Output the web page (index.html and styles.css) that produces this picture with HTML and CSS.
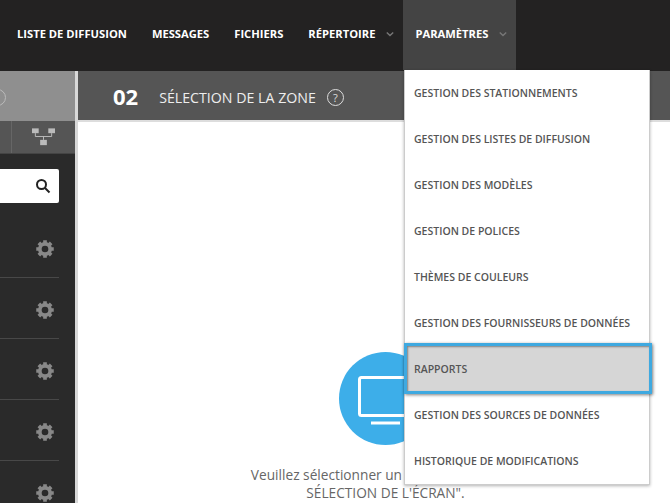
FILE: index.html
```html
<!DOCTYPE html>
<html lang="fr">
<head>
    <meta charset="UTF-8">
    <meta name="viewport" content="width=device-width, initial-scale=1.0">
    <title>Paramètres</title>
    <link rel="stylesheet" href="styles.css">
</head>
<body>
    <svg class="sprites" width="0" height="0">
        <symbol id="gear" viewBox="0 0 24 24">
            <g stroke="currentColor" stroke-width="4.4" fill="none">
                <circle cx="12" cy="12" r="6.2"/>
                <path d="M12 1.5V6M12 18v4.5M1.5 12H6M18 12h4.5M4.6 4.6l3 3M16.4 16.4l3 3M19.4 4.6l-3 3M7.6 16.4l-3 3"/>
            </g>
        </symbol>
    </svg>

    <header class="topbar">
        <nav class="nav">
            <a class="nav-item">LISTE DE DIFFUSION</a>
            <a class="nav-item">MESSAGES</a>
            <a class="nav-item">FICHIERS</a>
            <a class="nav-item has-menu">RÉPERTOIRE <svg class="chevron" viewBox="0 0 10 6"><path d="M1 1l4 4 4-4"/></svg></a>
            <a class="nav-item has-menu active">PARAMÈTRES <svg class="chevron" viewBox="0 0 10 6"><path d="M1 1l4 4 4-4"/></svg></a>
        </nav>
    </header>

    <div class="workspace">
        <aside class="sidebar">
            <div class="side-head"><span class="help help-side"></span></div>
            <div class="side-tools">
                <span class="tool-cell">
                    <svg class="tree-icon" viewBox="0 0 24 18">
                        <rect x="0" y="0" width="7" height="5"/>
                        <rect x="17" y="0" width="7" height="5"/>
                        <rect x="8.5" y="12" width="7" height="5.5"/>
                        <path class="tree-line" d="M3.5 5v3.5h17V5M12 8.5V12"/>
                    </svg>
                </span>
            </div>
            <div class="search-wrap">
                <div class="search-box">
                    <svg class="search-icon" viewBox="0 0 16 16"><circle cx="6.5" cy="6.5" r="4.5"/><path d="M10 10l4.5 4.5"/></svg>
                </div>
            </div>
            <ul class="zone-list">
                <li class="zone-row"><svg class="gear"><use href="#gear"/></svg></li>
                <li class="zone-row"><svg class="gear"><use href="#gear"/></svg></li>
                <li class="zone-row"><svg class="gear"><use href="#gear"/></svg></li>
                <li class="zone-row"><svg class="gear"><use href="#gear"/></svg></li>
                <li class="zone-row"><svg class="gear"><use href="#gear"/></svg></li>
            </ul>
        </aside>

        <main class="content">
            <div class="content-head">
                <span class="step">02</span>
                <h2 class="step-title">SÉLECTION DE LA ZONE</h2>
                <span class="help">?</span>
            </div>
            <div class="empty">
                <div class="empty-circle">
                    <svg class="monitor" viewBox="0 0 55 50">
                        <rect x="1.5" y="1.5" width="52" height="38" rx="2"/>
                        <path d="M13 47h29"/>
                    </svg>
                </div>
                <p class="empty-text">Veuillez sélectionner un écran de l'onglet "<br>SÉLECTION DE L'ÉCRAN".</p>
            </div>
        </main>
    </div>

    <ul class="dropdown">
        <li class="drop-item">GESTION DES STATIONNEMENTS</li>
        <li class="drop-item">GESTION DES LISTES DE DIFFUSION</li>
        <li class="drop-item">GESTION DES MODÈLES</li>
        <li class="drop-item">GESTION DE POLICES</li>
        <li class="drop-item">THÈMES DE COULEURS</li>
        <li class="drop-item">GESTION DES FOURNISSEURS DE DONNÉES</li>
        <li class="drop-item selected">RAPPORTS</li>
        <li class="drop-item">GESTION DES SOURCES DE DONNÉES</li>
        <li class="drop-item">HISTORIQUE DE MODIFICATIONS</li>
    </ul>
</body>
</html>
```

FILE: styles.css
```css
* {
    box-sizing: border-box;
}

html, body {
    height: 100%;
}

body {
    position: relative;
    margin: 0;
    overflow: hidden;
    font-family: "Open Sans", sans-serif;
    background-color: #fff;
}

.sprites {
    position: absolute;
}

.topbar {
    height: 71px;
    background-color: #232222;
}

.nav {
    display: flex;
    height: 70px;
    padding-left: 4.5px;
}

.nav-item {
    display: flex;
    align-items: center;
    gap: 11px;
    padding: 0 12.5px 3px;
    font-size: 11.2px;
    font-weight: 700;
    color: #fff;
    white-space: nowrap;
}

.nav-item.has-menu {
    padding-right: 8.5px;
}

.nav-item.active {
    background-color: #444;
}

.chevron {
    width: 8px;
    height: 6px;
    fill: none;
    stroke: #777;
    stroke-width: 1.8;
}

.workspace {
    display: flex;
    height: 432px;
}

/* left panel, cut by the window */
.sidebar {
    flex: none;
    width: 78px;
    border-right: 3px solid #d8d8d8;
    background-color: #2a2a2a;
    overflow: hidden;
}

.side-head {
    display: flex;
    align-items: center;
    justify-content: flex-end;
    height: 50px;
    padding: 2px 69px 0 0;
    background-color: #8f8f8f;
}

.side-tools {
    display: flex;
    justify-content: flex-end;
    height: 33px;
    background-color: #555;
    border-bottom: 1px solid #444;
}

.tool-cell {
    display: flex;
    align-items: center;
    justify-content: center;
    width: 64px;
    border-left: 1px solid #666;
}

.tree-icon {
    width: 23px;
    height: 18px;
    fill: #bbb;
}

.tree-line {
    fill: none;
    stroke: #bbb;
    stroke-width: 1;
}

.search-wrap {
    padding: 15px 16px 0 0;
}

.search-box {
    display: flex;
    align-items: center;
    justify-content: flex-end;
    height: 34px;
    padding-right: 8px;
    background-color: #fff;
    border-radius: 0 2px 2px 0;
}

.search-icon {
    width: 16px;
    height: 16px;
    fill: none;
    stroke: #222;
    stroke-width: 2;
}

.zone-list {
    margin: 0;
    padding: 0 16px 0 0;
    list-style: none;
}

.zone-row {
    display: flex;
    align-items: center;
    justify-content: flex-end;
    height: 61px;
    padding: 3px 4px 0 0;
    border-bottom: 1px solid #484848;
}

.zone-row:first-child {
    height: 75px;
    padding-top: 18px;
}

.gear {
    width: 20px;
    height: 20px;
    color: #888;
}

.content {
    flex: none;
    width: 615px;
    display: flex;
    flex-direction: column;
}

.content-head {
    display: flex;
    align-items: center;
    height: 51px;
    padding-left: 35px;
    background-color: #555;
    border-bottom: 2px solid #ddd;
    color: #eee;
}

.step {
    font-size: 22px;
    font-weight: 700;
    color: #fff;
}

.step-title {
    margin: 4px 11px 0 21px;
    font-size: 14.2px;
    font-weight: 400;
}

.help {
    display: flex;
    align-items: center;
    justify-content: center;
    width: 17px;
    height: 17px;
    margin-top: 3px;
    border: 1px solid #ddd;
    border-radius: 50%;
    font-size: 11px;
    color: #ddd;
}

.help-side {
    flex: none;
    margin-top: 0;
    border-color: #bbb;
}

.empty {
    display: flex;
    flex-direction: column;
    align-items: center;
    padding-top: 230px;
}

.empty-circle {
    display: flex;
    align-items: center;
    justify-content: center;
    width: 93px;
    height: 93px;
    border-radius: 50%;
    background-color: #3daee9;
}

.monitor {
    width: 55px;
    height: 50px;
    margin-top: 4px;
    fill: none;
    stroke: #fff;
    stroke-width: 3;
}

.empty-text {
    margin: 21px 0 0;
    font-size: 13.7px;
    line-height: 18px;
    color: #666;
    text-align: center;
}

/* open menu under PARAMETRES */
.dropdown {
    position: absolute;
    top: 70px;
    left: 404px;
    width: 246px;
    margin: 0;
    padding: 0;
    list-style: none;
    background-color: #fff;
    border: 1px solid #ccc;
    border-top: 0;
    box-shadow: 0 1px 3px rgba(0, 0, 0, 0.3);
}

.drop-item {
    display: flex;
    align-items: center;
    height: 46px;
    padding-left: 9px;
    font-size: 10.5px;
    font-weight: 600;
    color: #555;
    white-space: nowrap;
}

.drop-item.selected {
    position: relative;
    height: 51px;
    margin: -3px -3px -2px -1px;
    padding-left: 7px;
    background-color: #d6d6d6;
    border: 3px solid #3fa9e0;
    box-shadow: 1px 1px 3px rgba(0, 0, 0, 0.5), inset 1px 1px 2px rgba(0, 0, 0, 0.4);
}
```
